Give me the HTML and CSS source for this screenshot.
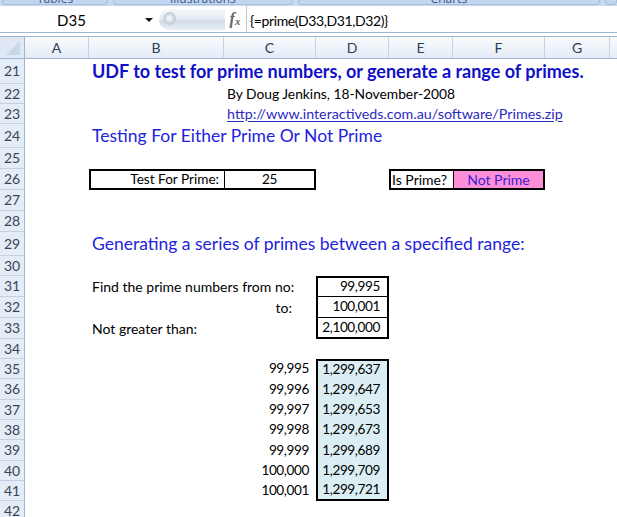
FILE: index.html
```html
<!DOCTYPE html>
<html>
<head>
<meta charset="utf-8">
<link rel="stylesheet" href="styles.css">
</head>
<body>
<div class="ribbon">
  <div class="grp g1"><span>Tables</span></div>
  <div class="grp g2"><span>Illustrations</span></div>
  <div class="grp g3"><span>Charts</span></div>
  <div class="grp g4"></div>
</div>
<div class="fbar">
  <div class="namebox"><span class="nm">D35</span><span class="arrow"></span></div>
  <div class="handle"><span class="dot"></span></div>
  <div class="fx">f<span>x</span></div>
  <div class="formula">{=prime(D33,D31,D32)}</div>
</div>
<div class="sheet">
  <div class="row hdr">
    <div class="corner"><svg width="24" height="21" viewBox="0 0 24 21"><polygon points="20,4 20,18 6,18" fill="#c9d6e6"/></svg></div>
    <div class="ch">A</div><div class="ch">B</div><div class="ch">C</div><div class="ch">D</div><div class="ch">E</div><div class="ch">F</div><div class="ch">G</div><div class="ch last"></div>
  </div>

  <div class="row r25"><div class="rh">21</div><div class="c cB title">UDF to test for prime numbers, or generate a range of primes.</div></div>
  <div class="row r20"><div class="rh">22</div><div class="c cC byline">By Doug Jenkins, 18-November-2008</div></div>
  <div class="row r20"><div class="rh">23</div><div class="c cC link">http://www.interactiveds.com.au/software/Primes.zip</div></div>
  <div class="row r24"><div class="rh">24</div><div class="c cB head">Testing For Either Prime Or Not Prime</div></div>
  <div class="row r21"><div class="rh">25</div></div>
  <div class="row r21"><div class="rh">26</div>
    <div class="c colB right tb bb lb lbl">Test For Prime:</div>
    <div class="c colC center tb bb rb thin-l num">25</div>
    <div class="c colE tb bb lb isp">Is Prime?</div>
    <div class="c colF center tb bb rb thin-l pink">Not Prime</div>
  </div>
  <div class="row r21"><div class="rh">27</div></div>
  <div class="row r21"><div class="rh">28</div></div>
  <div class="row r24"><div class="rh">29</div><div class="c cB head">Generating a series of primes between a specified range:</div></div>
  <div class="row r20"><div class="rh">30</div></div>
  <div class="row r21"><div class="rh">31</div><div class="c cBC">Find the prime numbers from no:</div><div class="c colD right num lb rb tb bt1">99,995</div></div>
  <div class="row r21"><div class="rh">32</div><div class="c colC right to">to:</div><div class="c colD right num lb rb bt1">100,001</div></div>
  <div class="row r21"><div class="rh">33</div><div class="c cBC">Not greater than:</div><div class="c colD right num lb rb bb">2,100,000</div></div>
  <div class="row r20"><div class="rh">34</div></div>
  <div class="row r20"><div class="rh">35</div><div class="c colC right num">99,995</div><div class="c colD right num blue lb rb tb">1,299,637</div></div>
  <div class="row r21"><div class="rh">36</div><div class="c colC right num">99,996</div><div class="c colD right num blue lb rb">1,299,647</div></div>
  <div class="row r20"><div class="rh">37</div><div class="c colC right num">99,997</div><div class="c colD right num blue lb rb">1,299,653</div></div>
  <div class="row r20"><div class="rh">38</div><div class="c colC right num">99,998</div><div class="c colD right num blue lb rb">1,299,673</div></div>
  <div class="row r21"><div class="rh">39</div><div class="c colC right num">99,999</div><div class="c colD right num blue lb rb">1,299,689</div></div>
  <div class="row r20"><div class="rh">40</div><div class="c colC right num">100,000</div><div class="c colD right num blue lb rb">1,299,709</div></div>
  <div class="row r20"><div class="rh">41</div><div class="c colC right num">100,001</div><div class="c colD right num blue lb rb bb">1,299,721</div></div>
  <div class="row r21"><div class="rh">42</div></div>
</div>
</body>
</html>
```
FILE: styles.css
```css
html, body {
  margin: 0;
  padding: 0;
  background: #ffffff;
  overflow: hidden;
}
body {
  width: 617px;
  height: 517px;
  font-family: "Lato", "Open Sans", sans-serif;
  color: #000;
}

/* ribbon group labels (cut off) */
.ribbon {
  height: 6px;
  background: #c9d9ee;
  display: flex;
  gap: 5px;
  padding-left: 2px;
  overflow: hidden;
}
.grp {
  height: 4px;
  border: 1px solid #a7bfdc;
  border-top: none;
  border-radius: 0 0 4px 4px;
  background: #c2d6ef;
  overflow: hidden;
  position: relative;
  font-family: "Open Sans", sans-serif;
  font-size: 12px;
  color: #3a5a8a;
  text-align: center;
}
.grp span {
  position: absolute;
  left: 0;
  right: 0;
  bottom: -1px;
  line-height: 12px;
}
.g1 { width: 105px; }
.g2 { width: 179px; }
.g3 { width: 303px; }
.g4 { width: 10px; }

/* formula bar */
.fbar {
  height: 26px;
  background: #fff;
  border-bottom: 1px solid #9eb6ce;
  display: flex;
  align-items: stretch;
  font-size: 15px;
}
.namebox {
  width: 155px;
  position: relative;
  display: flex;
  align-items: center;
  justify-content: center;
}
.nm { margin-left: -12px; margin-top: 2px; }
.arrow {
  position: absolute;
  right: 2px;
  top: 12px;
  width: 0;
  height: 0;
  border-left: 4px solid transparent;
  border-right: 4px solid transparent;
  border-top: 4px solid #111;
}
.handle {
  width: 66px;
  margin: 3px 0 2px 4px;
  border-radius: 11px 0 0 11px;
  background: linear-gradient(#f5f8fb, #e2e9f2 50%, #d0dbe8 51%, #e6edf5);
  position: relative;
}
.dot {
  position: absolute;
  left: 4px;
  top: 3px;
  width: 13px;
  height: 14px;
  border-radius: 50%;
  background: radial-gradient(circle at 50% 45%, #f2f4f7 15%, #c3cbd5 55%, #e6ebf1 80%);
}
.fx {
  width: 20px;
  font-family: "Liberation Serif", serif;
  font-style: italic;
  font-weight: 700;
  font-size: 16px;
  color: #666;
  display: flex;
  align-items: center;
  justify-content: center;
  border-right: 1px solid #b8c8dc;
  padding-right: 1px;
}
.fx span { font-size: 11px; margin-top: 3px; }
.formula {
  padding-left: 3px;
  display: flex;
  align-items: center;
  padding-top: 2px;
  font-size: 14px;
  letter-spacing: -0.4px;
}

/* sheet */
.sheet {
  margin-top: 3px;
  border-top: 1px solid #9eb6ce;
}
.row {
  display: grid;
  grid-template-columns: 25px 64px 135px 92px 73px 64px 92px 65px 7px;
  font-size: 14px;
  line-height: 1;
}
.r20 { height: 20px; }
.r21 { height: 21px; }
.r24 { height: 24px; }
.r25 { height: 25px; }

.hdr {
  height: 21px;
  background: linear-gradient(#f9fbfd, #e4ecf7);
  border-bottom: 1px solid #9eb6ce;
}
.corner {
  background: #dfe8f4;
  border-right: 1px solid #9eb6ce;
  display: flex;
  align-items: center;
  justify-content: center;
}
.ch {
  border-right: 1px solid #c5d3e3;
  display: flex;
  align-items: center;
  justify-content: center;
  font-size: 14px;
  color: #2c3e55;
}
.ch.last { border-right: none; }

.rh {
  grid-column: 1;
  background: #e4ecf7;
  border-right: 1px solid #9eb6ce;
  border-bottom: 1px solid #c3d1e2;
  color: #3a4555;
  font-size: 14px;
  display: flex;
  align-items: center;
  justify-content: center;
  box-sizing: border-box;
}

.c {
  display: flex;
  align-items: center;
  padding: 0 3px;
  white-space: nowrap;
  box-sizing: border-box;
  min-width: 0;
}
.cB { grid-column: 3 / span 7; }
.cBC { grid-column: 3 / span 2; }
.cC { grid-column: 4 / span 6; }
.colB { grid-column: 3; }
.colC { grid-column: 4; }
.colD { grid-column: 5; }
.colE { grid-column: 6; }
.colF { grid-column: 7; }
.right { justify-content: flex-end; }
.center { justify-content: center; }
.num { font-size: 13.6px; letter-spacing: -0.4px; }
.right.num { padding-right: 7px; }
.colB.right { padding-right: 5px; }
.lbl { font-size: 13.6px; }

.title {
  font-weight: 700;
  color: #1010c8;
  font-size: 18px;
  padding-bottom: 2px;
}
.head {
  color: #2323dc;
  font-size: 17.5px;
  padding-bottom: 1px;
}
.byline { font-size: 13.8px; }
.link {
  color: #2b2bc0;
  text-decoration: underline;
  text-underline-offset: 2px;
  font-size: 14.3px;
}
.to { padding-right: 24px; }

.tb { border-top: 2px solid #000; }
.bb { border-bottom: 2px solid #000; }
.lb { border-left: 2px solid #000; }
.rb { border-right: 2px solid #000; }
.thin-l { border-left: 1px solid #000; }
.bt1 { border-bottom: 1px solid #000; }
.isp { padding-left: 1px; }
.pink { background: #fd8fd8; color: #3a1fd0; }
.blue { background: #dbeef4; }
```
